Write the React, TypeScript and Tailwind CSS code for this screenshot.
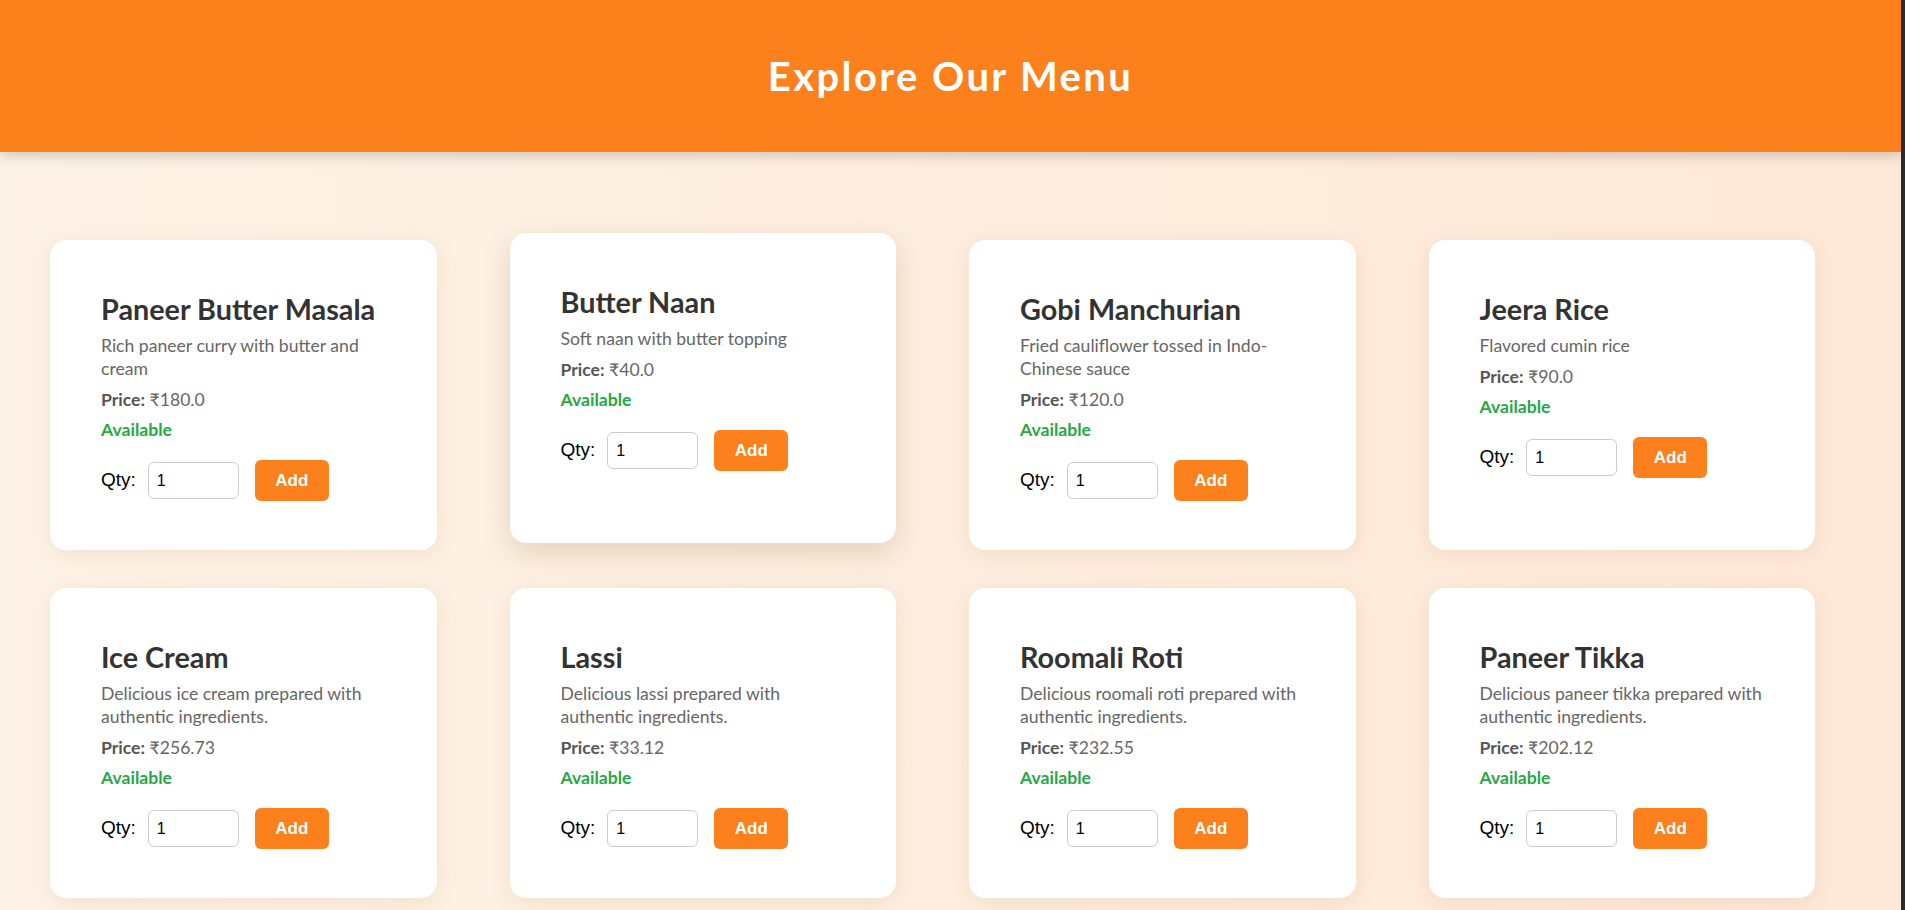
import React from "react";

type Item = { name: string; desc: string; price: string };

const items: Item[] = [
  { name: "Paneer Butter Masala", desc: "Rich paneer curry with butter and cream", price: "₹180.0" },
  { name: "Butter Naan", desc: "Soft naan with butter topping", price: "₹40.0" },
  { name: "Gobi Manchurian", desc: "Fried cauliflower tossed in Indo-Chinese sauce", price: "₹120.0" },
  { name: "Jeera Rice", desc: "Flavored cumin rice", price: "₹90.0" },
  { name: "Ice Cream", desc: "Delicious ice cream prepared with authentic ingredients.", price: "₹256.73" },
  { name: "Lassi", desc: "Delicious lassi prepared with authentic ingredients.", price: "₹33.12" },
  { name: "Roomali Roti", desc: "Delicious roomali roti prepared with authentic ingredients.", price: "₹232.55" },
  { name: "Paneer Tikka", desc: "Delicious paneer tikka prepared with authentic ingredients.", price: "₹202.12" },
];

function Card({ item, hovered }: { item: Item; hovered?: boolean }) {
  return (
    <div
      className={
        "bg-white rounded-[16px] pt-[52px] pb-[49px] px-[51px] " +
        (hovered
          ? "-translate-y-[7px] shadow-[0_10px_28px_rgba(120,70,20,0.18)]"
          : "shadow-[0_4px_22px_rgba(140,80,20,0.10)]")
      }
    >
      <h3 className="font-['Lato','Noto_Sans',sans-serif] font-bold text-[28.8px] leading-[34px] text-[#333333]">
        {item.name}
      </h3>
      <p className="mt-2 font-['Lato','Noto_Sans',sans-serif] text-[17.6px] leading-[23px] text-[#666666]">
        {item.desc}
      </p>
      <p className="mt-2 font-['Lato','Noto_Sans',sans-serif] text-[17.6px] leading-[23px] text-[#666666]">
        <span className="font-bold text-[#555555]">Price:</span> {item.price}
      </p>
      <p className="mt-[7px] font-['Lato','Noto_Sans',sans-serif] font-bold text-[17.6px] leading-[23px] text-[#28a745]">
        Available
      </p>
      <div className="mt-[19px] flex items-center h-[41px]">
        <label className="font-['Liberation_Sans',Arial,sans-serif] text-[19px] text-black">Qty:</label>
        <input
          type="number"
          defaultValue={1}
          className="ml-[12px] w-[91px] h-[37px] border border-[#cccccc] rounded-[6px] pl-[8px] font-['Liberation_Sans',Arial,sans-serif] text-[16px] text-black outline-none [appearance:textfield] [&::-webkit-inner-spin-button]:appearance-none [&::-webkit-outer-spin-button]:appearance-none"
        />
        <button className="ml-[16px] w-[74px] h-[41px] rounded-[6px] bg-[#fc801c] text-white font-bold font-['Liberation_Sans',Arial,sans-serif] text-[17px]">
          Add
        </button>
      </div>
    </div>
  );
}

export default function App() {
  return (
    <div className="flex w-[1905px] h-[910px] overflow-hidden">
      <div className="flex-1 h-[910px] overflow-hidden bg-gradient-to-r from-[#fdf3e6] to-[#fee8d7]">
        <header className="relative z-10 h-[152px] bg-[#fc801c] flex items-center justify-center shadow-[0_4px_12px_rgba(0,0,0,0.18)]">
          <h1 className="font-['Lato','Noto_Sans',sans-serif] font-bold text-[40px] leading-[48px] tracking-[2.4px] text-white">
            Explore Our Menu
          </h1>
        </header>
        <main className="pt-[88px] pl-[50px] grid grid-cols-[repeat(4,386.5px)] gap-x-[73px] gap-y-[38px]">
          {items.map((it, i) => (
            <Card key={it.name} item={it} hovered={i === 1} />
          ))}
        </main>
      </div>
      <div className="w-[4px] h-[910px] bg-[#2b2b2b]" />
    </div>
  );
}
